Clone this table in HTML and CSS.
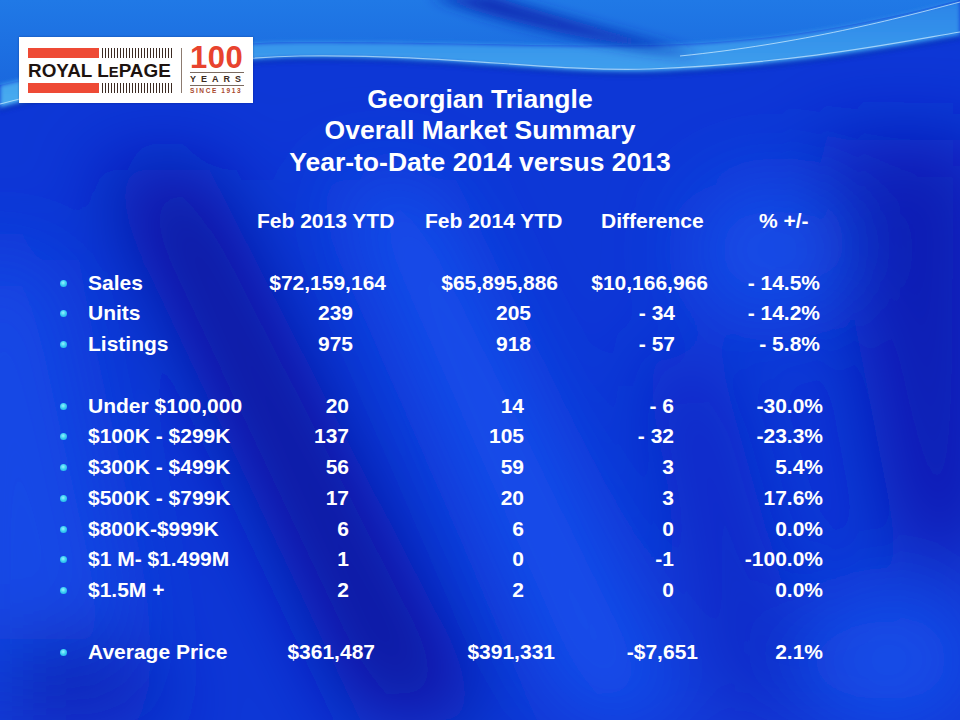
FILE: index.html
```html
<!DOCTYPE html>
<html lang="en">
<head>
<meta charset="utf-8">
<title>Georgian Triangle Overall Market Summary</title>
<link rel="stylesheet" href="styles.css">
</head>
<body>
<div class="slide">
  <svg class="bg" viewBox="0 0 960 720" preserveAspectRatio="none" aria-hidden="true">
    <defs>
      <filter id="blurL" x="-50%" y="-50%" width="200%" height="200%"><feGaussianBlur stdDeviation="40"/></filter>
      <filter id="blurM" x="-20%" y="-50%" width="140%" height="200%"><feGaussianBlur stdDeviation="7"/></filter>
      <filter id="blurS" x="-10%" y="-50%" width="120%" height="200%"><feGaussianBlur stdDeviation="2"/></filter>
      <linearGradient id="sky" x1="0" y1="0" x2="0" y2="1">
        <stop offset="0" stop-color="#2079e6"/>
        <stop offset="1" stop-color="#1a68de"/>
      </linearGradient>
      <linearGradient id="band" x1="0" y1="0" x2="0" y2="1">
        <stop offset="0" stop-color="#2a84e8"/>
        <stop offset="1" stop-color="#4aaef0"/>
      </linearGradient>
    </defs>
    <rect width="960" height="720" fill="#0d37d6"/>
    <g filter="url(#blurL)">
      <polygon points="100,170 210,170 490,720 360,720" fill="#0818a2"/>
      <polygon points="330,180 430,180 690,720 570,720" fill="#174fec"/>
      <polygon points="-60,260 50,260 150,720 -60,720" fill="#1448e6"/>
      <polygon points="820,140 990,140 990,560 900,560" fill="#0a1fb4"/>
      <ellipse cx="890" cy="660" rx="90" ry="70" fill="#164ee8"/>
      <ellipse cx="770" cy="250" rx="80" ry="70" fill="#164ee8"/>
      <polygon points="0,640 120,640 180,720 0,720" fill="#0a20b4"/>
      <polygon points="640,360 720,360 820,720 720,720" fill="#0c2cc8"/>
    </g>
    <path d="M0,0 H960 V0 C900,15 800,42 650,45 C550,47 450,42 300,42 C200,42 100,60 0,85 Z" fill="url(#sky)"/>
    <path d="M0,85 C100,60 200,42 300,42 C450,42 550,47 650,45 C800,42 900,15 960,0 L960,36 C900,46 800,66 650,72 C550,75 450,57 300,58 C200,60 100,82 0,108 Z" fill="url(#band)" filter="url(#blurS)"/>
    <path d="M430,-5 C500,22 600,44 700,56 C640,38 550,16 490,-5 Z" fill="#0b2cb4" filter="url(#blurM)"/>
    <path d="M0,104 C100,78 200,58 300,56 C450,54 550,72 650,69 C800,63 900,42 960,32" fill="none" stroke="#c8ecff" stroke-width="1.2" opacity="0.75"/>
    <path d="M680,56 C800,44 900,18 960,2" fill="none" stroke="#d8f2ff" stroke-width="1" opacity="0.7"/>
    <path d="M0,110 C100,84 200,62 300,60 C450,58 550,77 650,74 C800,68 900,48 960,38" fill="none" stroke="#0b2aa8" stroke-width="3" opacity="0.6" filter="url(#blurS)"/>
  </svg>

  <header class="head">
    <div class="logo">
      <div class="lp">
        <div class="bars"><span class="red"></span><span class="stripes"></span></div>
        <div class="word">ROYAL L<span class="sm">E</span>PAGE</div>
        <div class="bars"><span class="red"></span><span class="stripes"></span></div>
      </div>
      <span class="divider"></span>
      <div class="cent">
        <div class="hundred">100</div>
        <div class="years">YEARS</div>
        <div class="since">SINCE 1913</div>
      </div>
    </div>
    <h1 class="title">Georgian Triangle<br>Overall Market Summary<br>Year-to-Date 2014 versus 2013</h1>
  </header>

  <section class="table">
    <div class="hrow">
      <span></span>
      <span>Feb 2013 YTD</span>
      <span>Feb 2014 YTD</span>
      <span>Difference</span>
      <span>% +/-</span>
    </div>
    <div class="blank"></div>
    <div class="row top"><span class="bullet"></span><span class="lbl">Sales</span><span class="v">$72,159,164</span><span class="v">$65,895,886</span><span class="v">$10,166,966</span><span class="v">- 14.5%</span></div>
    <div class="row mid"><span class="bullet"></span><span class="lbl">Units</span><span class="v">239</span><span class="v">205</span><span class="v">- 34</span><span class="v">- 14.2%</span></div>
    <div class="row mid"><span class="bullet"></span><span class="lbl">Listings</span><span class="v">975</span><span class="v">918</span><span class="v">- 57</span><span class="v">- 5.8%</span></div>
    <div class="blank"></div>
    <div class="row"><span class="bullet"></span><span class="lbl">Under $100,000</span><span class="v">20</span><span class="v">14</span><span class="v">- 6</span><span class="v">-30.0%</span></div>
    <div class="row"><span class="bullet"></span><span class="lbl">$100K - $299K</span><span class="v">137</span><span class="v">105</span><span class="v">- 32</span><span class="v">-23.3%</span></div>
    <div class="row"><span class="bullet"></span><span class="lbl">$300K - $499K</span><span class="v">56</span><span class="v">59</span><span class="v">3</span><span class="v">5.4%</span></div>
    <div class="row"><span class="bullet"></span><span class="lbl">$500K - $799K</span><span class="v">17</span><span class="v">20</span><span class="v">3</span><span class="v">17.6%</span></div>
    <div class="row"><span class="bullet"></span><span class="lbl">$800K-$999K</span><span class="v">6</span><span class="v">6</span><span class="v">0</span><span class="v">0.0%</span></div>
    <div class="row"><span class="bullet"></span><span class="lbl">$1 M- $1.499M</span><span class="v">1</span><span class="v">0</span><span class="v">-1</span><span class="v">-100.0%</span></div>
    <div class="row"><span class="bullet"></span><span class="lbl">$1.5M +</span><span class="v">2</span><span class="v">2</span><span class="v">0</span><span class="v">0.0%</span></div>
    <div class="blank"></div>
    <div class="row avg"><span class="bullet"></span><span class="lbl">Average Price</span><span class="v">$361,487</span><span class="v">$391,331</span><span class="v">-$7,651</span><span class="v">2.1%</span></div>
  </section>
</div>
</body>
</html>
```

FILE: styles.css
```css
html, body {
  margin: 0;
  padding: 0;
  background: #0d37d6;
}

.slide {
  position: relative;
  width: 960px;
  height: 720px;
  overflow: hidden;
  font-family: "Liberation Sans", Arial, sans-serif;
  color: #ffffff;
}

.bg {
  position: absolute;
  left: 0;
  top: 0;
  width: 960px;
  height: 720px;
  z-index: 0;
}

.head,
.table {
  position: relative;
  z-index: 1;
}

/* header: logo and centred title share one grid cell */
.head {
  display: grid;
}

.head > * {
  grid-area: 1 / 1;
}

.logo {
  justify-self: start;
  align-self: start;
  margin: 37px 0 0 19px;
  width: 234px;
  height: 66px;
  box-sizing: border-box;
  padding: 11px 0 0 9px;
  background: #ffffff;
  display: flex;
  align-items: flex-start;
  box-shadow: 0 0 2px rgba(0, 20, 80, 0.4);
}

.lp {
  width: 145px;
  display: flex;
  flex-direction: column;
}

.bars {
  display: flex;
  justify-content: space-between;
  height: 10px;
}

.red {
  width: 71px;
  background: #ee4a35;
}

.stripes {
  width: 71px;
  background: repeating-linear-gradient(90deg, #3b2a22 0 1px, #ffffff 1px 3px);
}

.word {
  height: 25px;
  line-height: 25px;
  font-size: 18.9px;
  font-weight: bold;
  color: #1e130f;
  white-space: nowrap;
}

.word .sm {
  font-size: 0.78em;
}

.divider {
  width: 1px;
  height: 45px;
  background: #8c7b70;
  margin: 0 8px 0 8px;
}

.cent {
  width: 54px;
  margin-top: -1px;
  display: flex;
  flex-direction: column;
}

.hundred {
  height: 22px;
  font-size: 31px;
  line-height: 22px;
  font-weight: bold;
  color: #e8432e;
  letter-spacing: 0.5px;
}

.years {
  margin-top: 3px;
  height: 12px;
  border-top: 1px solid #7a6a60;
  border-bottom: 1px solid #7a6a60;
  font-size: 9px;
  line-height: 12px;
  font-weight: bold;
  color: #3b2a22;
  letter-spacing: 5px;
  white-space: nowrap;
}

.since {
  height: 9px;
  font-size: 6.5px;
  line-height: 9px;
  font-weight: bold;
  color: #a8482c;
  letter-spacing: 1.6px;
  white-space: nowrap;
}

.title {
  margin: 84px 0 0;
  text-align: center;
  font-size: 26.5px;
  line-height: 31.4px;
  font-weight: bold;
  color: #ffffff;
}

/* table */
.table {
  margin-top: 28px;
  font-size: 21px;
  line-height: 30.75px;
  font-weight: bold;
  white-space: nowrap;
}

.hrow {
  display: grid;
  grid-template-columns: 257px 168px 176px 158px auto;
}

.blank {
  height: 30.75px;
}

.row {
  --c1: 89px;
  --c2: 175px;
  --c3: 150px;
  --c4: 149px;
  display: grid;
  grid-template-columns: 28px 172px var(--c1) var(--c2) var(--c3) var(--c4);
  padding-left: 60px;
  align-items: center;
}

.row.mid {
  --c1: 93px;
  --c2: 178px;
  --c3: 144px;
  --c4: 145px;
}

.row.top {
  --c1: 126px;
  --c2: 172px;
  --c3: 150px;
  --c4: 112px;
}

.row.avg {
  --c1: 115px;
  --c2: 180px;
  --c3: 143px;
  --c4: 125px;
}

.row .v {
  text-align: right;
}

.bullet {
  width: 7px;
  height: 7px;
  border-radius: 50%;
  background: radial-gradient(circle at 45% 40%, #9af2ff 0, #3cd0f4 45%, #1aa6e0 100%);
}
```
